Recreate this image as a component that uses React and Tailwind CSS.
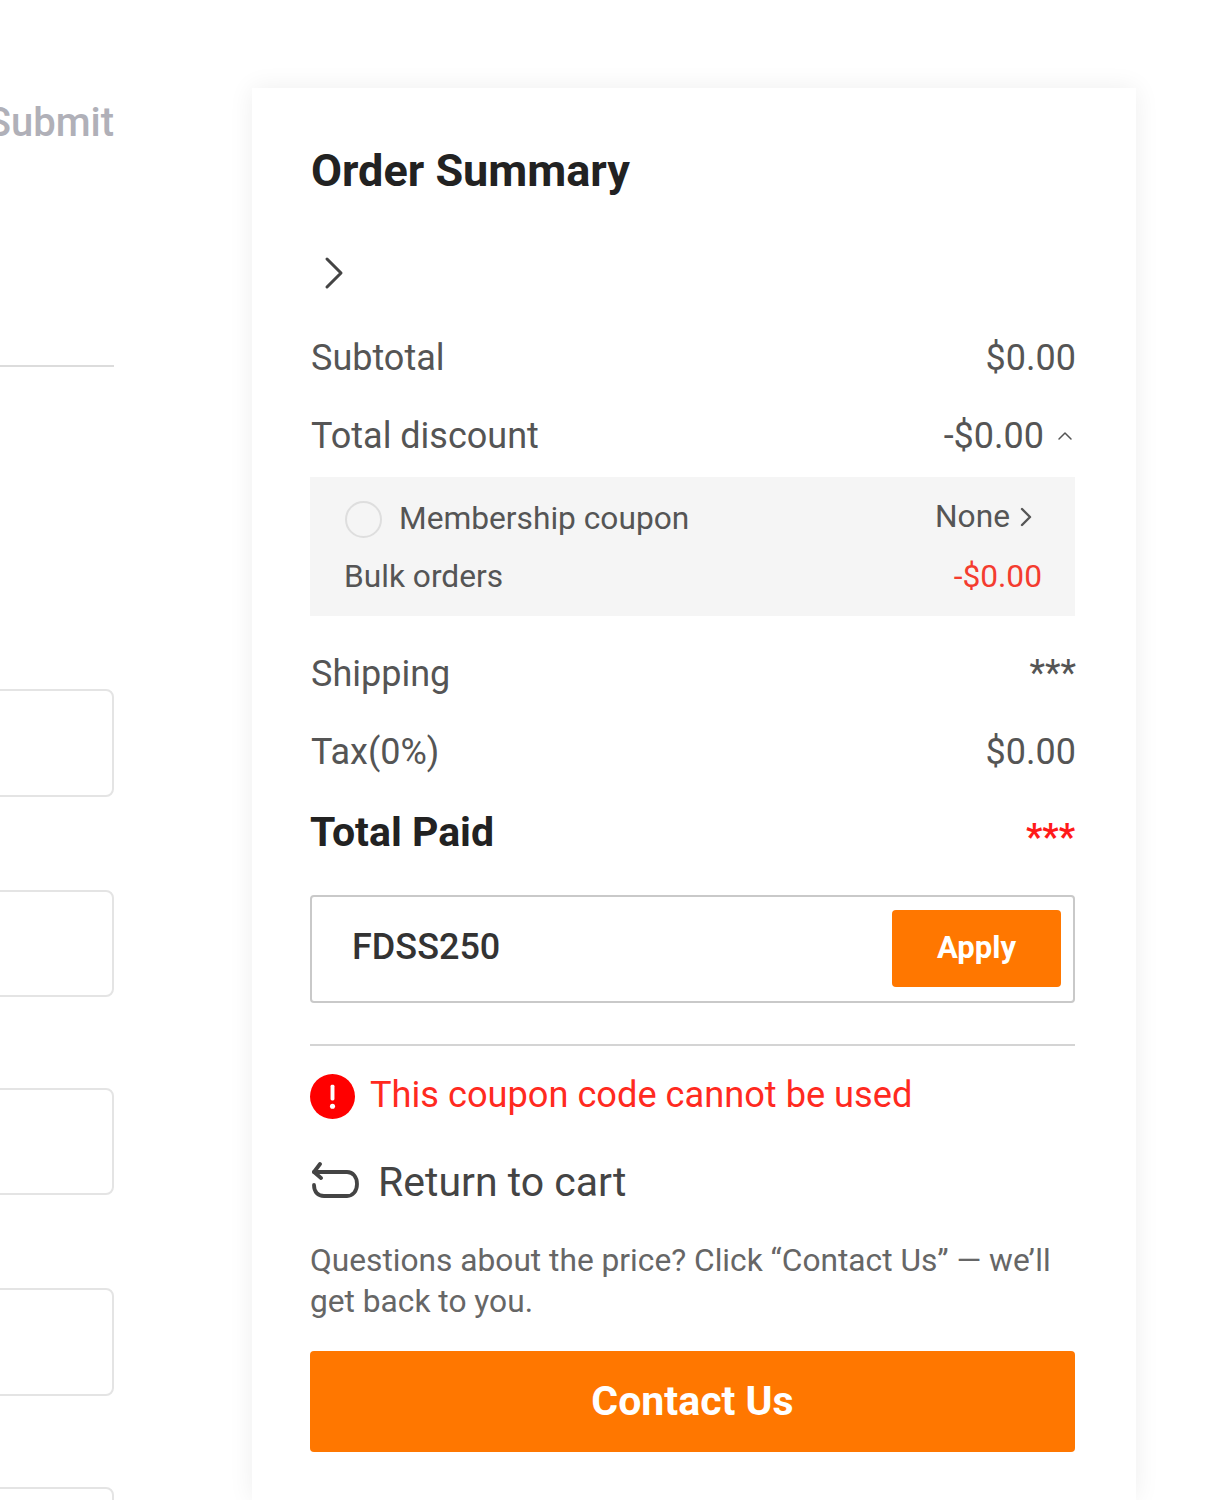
import React from 'react';
import { ChevronRight, ChevronUp } from 'lucide-react';

// 左侧表单（只露出一小截）
function FormColumn() {
  const fields = ['mt-[322px] h-[108px]', 'mt-[93px] h-[107px]', 'mt-[91px] h-[107px]', 'mt-[93px] h-[108px]', 'mt-[91px] h-[108px]'];
  return (
    <div className="w-[114px] h-[1500px] shrink-0 overflow-hidden">
      <div className="mt-[101px] flex justify-end text-[40px] leading-[44px] font-medium text-[#b0b0b8] whitespace-nowrap">
        Submit
      </div>
      <div className="mt-[220px] h-[2px] bg-[#dcdcdc]"></div>
      {fields.map((cls, i) => (
        <div key={i} className={`${cls} -ml-4 border-2 border-[#e4e4e4] rounded-lg bg-white`}></div>
      ))}
    </div>
  );
}

function Row({ label, children, className }) {
  return (
    <div className={`flex justify-between items-center text-[36px] leading-[44px] text-[#555555] ${className}`}>
      <span>{label}</span>
      {children}
    </div>
  );
}

function DiscountBox() {
  return (
    <div className="mt-[19px] h-[139px] bg-[#f5f5f5] pl-[35px] pr-[33px] pt-[22px] text-[31.7px] leading-[40px] text-[#555555]">
      <div className="flex justify-between items-center">
        <div className="flex items-center gap-[17px]">
          <span className="w-[37px] h-[37px] rounded-full border-2 border-[#dedede]"></span>
          <span>Membership coupon</span>
        </div>
        <div className="flex items-center -mt-1">
          <span>None</span>
          <ChevronRight className="w-[32px] h-[32px]" strokeWidth={1.8} />
        </div>
      </div>
      <div className="mt-[18px] flex justify-between">
        <span className="-ml-px">Bulk orders</span>
        <span className="text-[#f43c2f]">-$0.00</span>
      </div>
    </div>
  );
}

function CouponInput() {
  return (
    <div className="mt-[40px] h-[108px] border-2 border-[#c9c9c9] rounded flex items-center justify-between pl-[40px] pr-[12px]">
      <span className="text-[36px] font-medium text-[#333333] -mt-[5px]">FDSS250</span>
      <button className="w-[169px] h-[77px] -mt-[2px] bg-[#ff7700] rounded text-white text-[31px] font-bold">Apply</button>
    </div>
  );
}

function OrderSummary() {
  return (
    <div className="ml-[138px] mt-[88px] w-[884px] h-[1412px] bg-white shadow-[0_0_24px_rgba(0,0,0,0.07)] pl-[58px] pr-[61px] pt-[54px]">
      <h2 className="pl-px text-[45px] leading-[58px] font-bold text-[#222222]">Order Summary</h2>
      <ChevronRight className="mt-[45px] -ml-[4px] w-[56px] h-[56px] text-[#444444]" strokeWidth={1.3} />
      <Row label="Subtotal" className="mt-[35px] pl-px">
        <span className="-mr-px">$0.00</span>
      </Row>
      <Row label="Total discount" className="mt-[34px] pl-px">
        <div className="flex items-center -mr-[2px]">
          <span>-$0.00</span>
          <ChevronUp className="ml-[9px] w-[24px] h-[24px]" strokeWidth={1.5} />
        </div>
      </Row>
      <DiscountBox />
      <Row label="Shipping" className="mt-[36px] pl-px">
        <span className="text-[36px] -mt-[2px] -mr-px">***</span>
      </Row>
      <Row label="Tax(0%)" className="mt-[34px] pl-px">
        <span className="-mr-px">$0.00</span>
      </Row>
      <div className="mt-[35px] h-[46px] flex justify-between items-start">
        <span className="text-[41px] leading-[46px] font-bold text-[#222222]">Total Paid</span>
        <span className="text-[36px] leading-[46px] font-bold text-[#ff1a1a] mt-[5px]">***</span>
      </div>
      <CouponInput />
      <div className="mt-[41px] h-[2px] bg-[#d4d4d4]"></div>
      <div className="mt-[28px] flex items-center gap-[15px]">
        <svg viewBox="0 0 46 46" className="w-[45px] h-[45px]">
          <circle cx="23" cy="23" r="23" fill="#ff0000" />
          <rect x="21" y="11" width="4" height="16" rx="1.5" fill="#ffffff" />
          <circle cx="23" cy="33" r="2.6" fill="#ffffff" />
        </svg>
        <span className="text-[36.2px] leading-[44px] text-[#ff2a1f] -mt-[4px]">This coupon code cannot be used</span>
      </div>
      <div className="mt-[39px] flex items-center gap-[19px] pl-[2px]">
        <svg viewBox="0 0 47 36" className="w-[47px] h-[36px] -mt-[4px] text-[#444444]" fill="none" stroke="currentColor" strokeWidth="3.8" strokeLinecap="round" strokeLinejoin="round">
          <path d="M8 2 L2 10 L9 16" />
          <path d="M2 10 H35 C41 10 45 15 45 22 C45 29 41 34 35 34 H12 C6 34 2 30 2 23" />
        </svg>
        <span className="text-[41px] leading-[48px] text-[#444444]">Return to cart</span>
      </div>
      <p className="mt-[34px] text-[31.7px] leading-[41px] text-[#666666]">
        Questions about the price? Click “Contact Us” — we’ll get back to you.
      </p>
      <button className="mt-[29px] w-full h-[101px] bg-[#ff7700] rounded text-white text-[41px] font-bold">Contact Us</button>
    </div>
  );
}

export default function App() {
  return (
    <div className="flex w-[1227px] h-[1500px] overflow-hidden bg-white font-['Roboto',sans-serif]">
      <FormColumn />
      <OrderSummary />
    </div>
  );
}
